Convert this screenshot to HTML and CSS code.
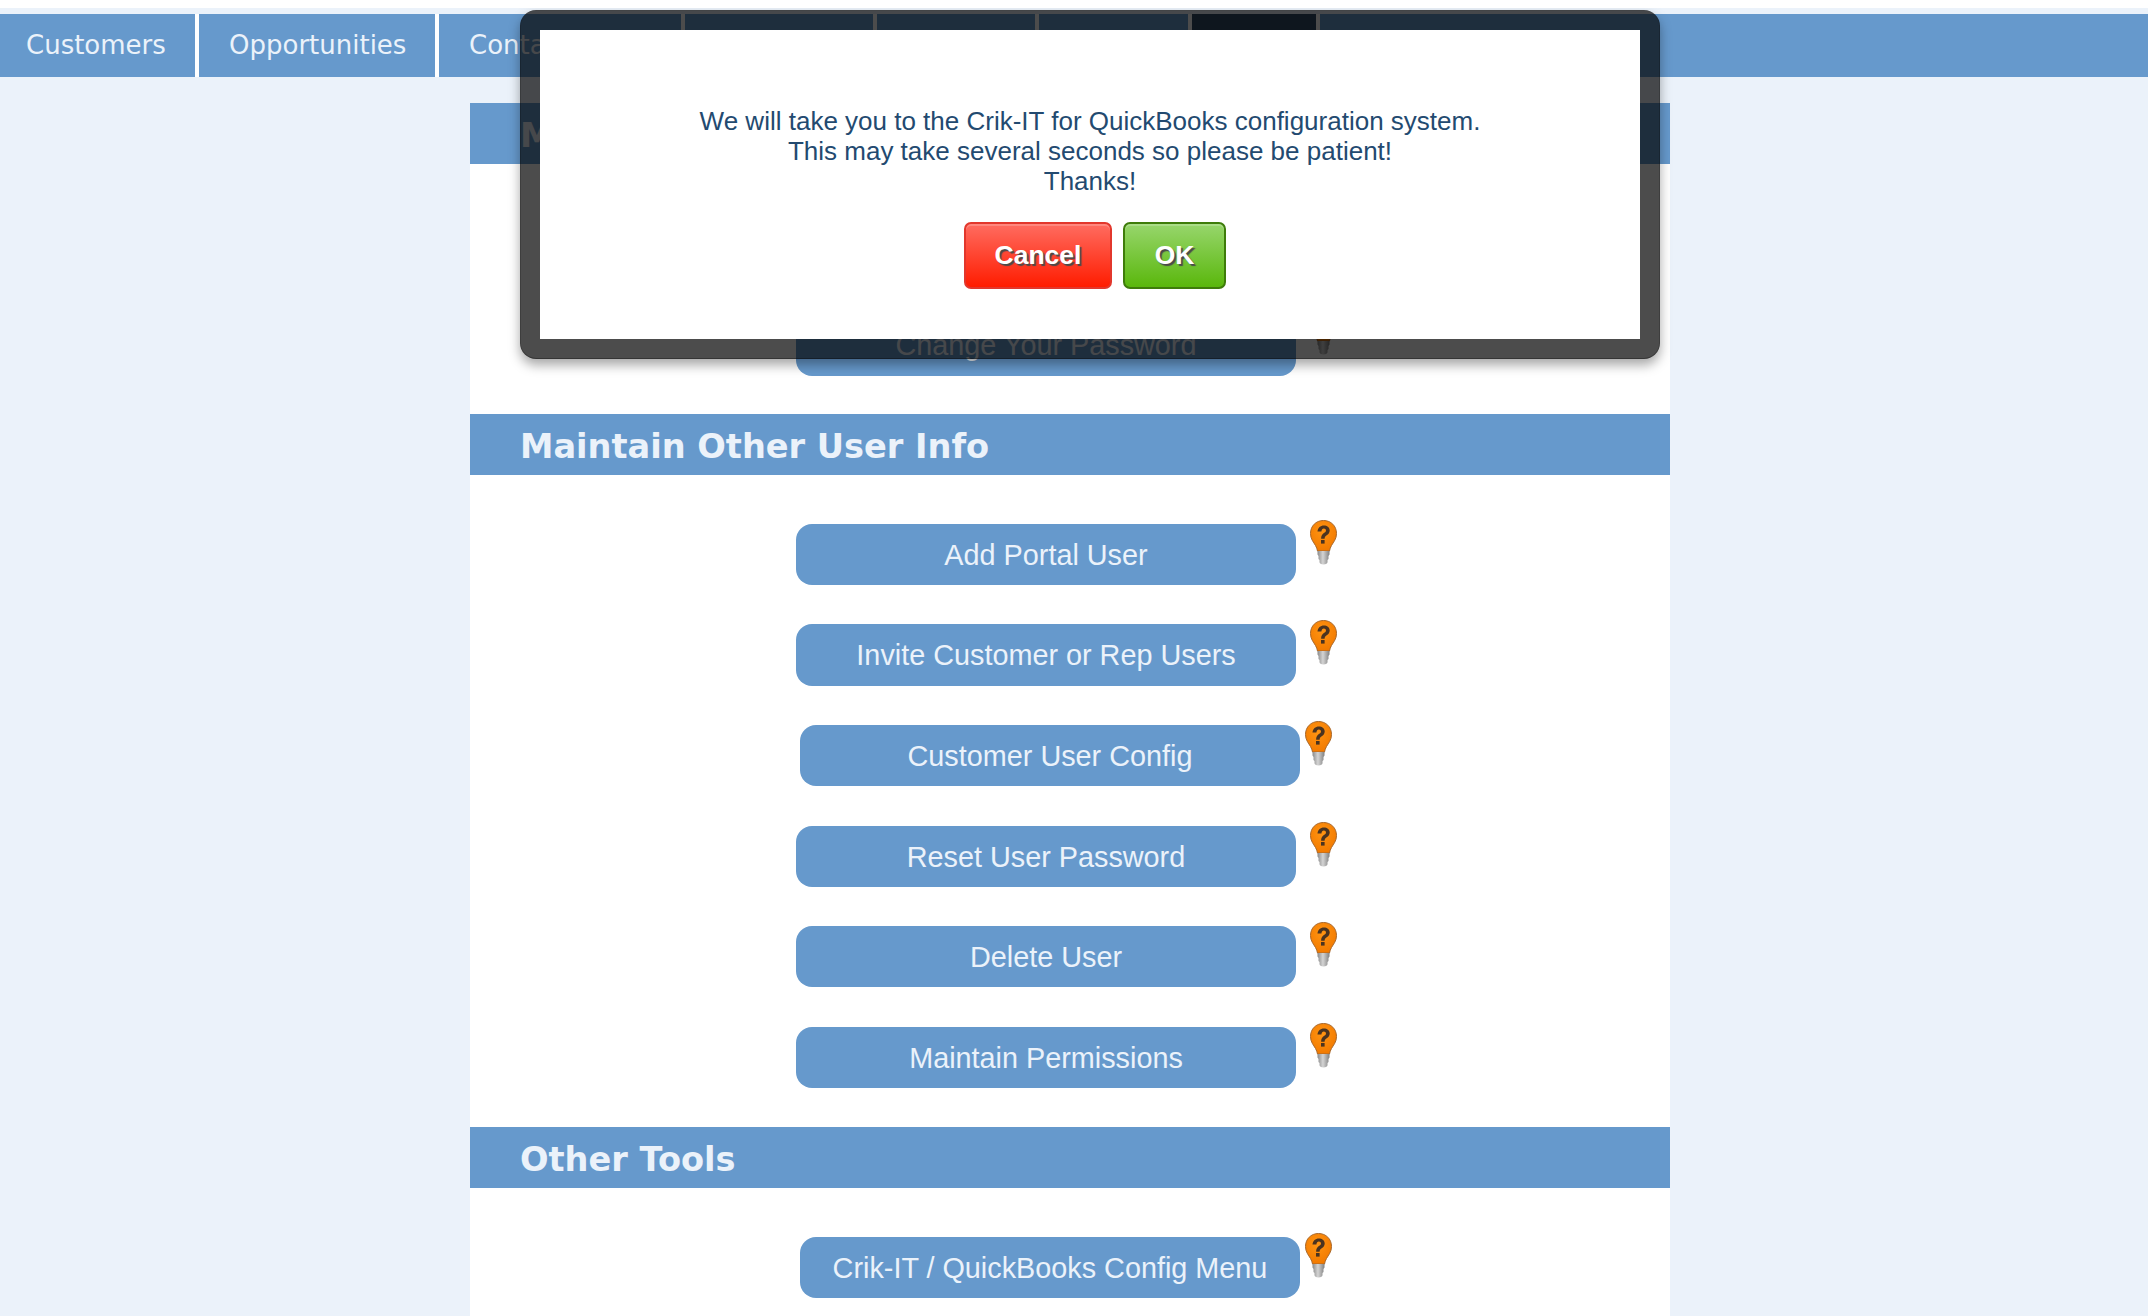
FILE: index.html
```html
<!DOCTYPE html>
<html lang="en">
<head>
<meta charset="utf-8">
<title>Crik-IT Portal</title>
<link rel="stylesheet" href="styles.css">
</head>
<body>
<svg class="defs" width="0" height="0" aria-hidden="true">
  <defs>
    <radialGradient id="bulbFill" cx="45%" cy="35%" r="65%">
      <stop offset="0" stop-color="#ff9412"/>
      <stop offset="1" stop-color="#f27a00"/>
    </radialGradient>
    <linearGradient id="baseFill" x1="0" x2="1" y1="0" y2="0">
      <stop offset="0" stop-color="#8a8a8a"/>
      <stop offset="0.45" stop-color="#d4d4d4"/>
      <stop offset="1" stop-color="#808080"/>
    </linearGradient>
    <symbol id="bulb" viewBox="0 0 27 45">
      <path d="M13.500 .5C6 .5 .5 6 .5 13.500c0 5.500 3 8.500 5 12 1 1.800 1.700 3.500 2 5.500h12c.3-2 1-3.700 2-5.500 2-3.500 5-6.500 5-12C26.500 6 21 .5 13.500 .5z" fill="url(#bulbFill)" stroke="#a8672a" stroke-width="1"/>
      <path d="M7.500 31h12v3.500l-1 1.500v3l-1 1v2c0 1.500-1.500 2.500-4 2.500s-4-1-4-2.500v-2l-1-1v-3l-1-1.500z" fill="url(#baseFill)"/>
      <path d="M7.500 11.500c.3-3.800 3-6 6.300-6 3.400 0 5.900 2.100 5.900 4.900 0 2.400-1.500 3.700-3 4.800-1.500 1-2.100 1.800-2.100 3.600h-3.500c0-3 1.100-4.400 2.800-5.700 1.300-1 2.100-1.600 2.100-2.700 0-1.100-.9-1.900-2.100-1.900-1.400 0-2.300 1-2.500 3z" fill="#4a3320"/>
      <rect x="11" y="20" width="3.600" height="3.600" fill="#4a3320"/>
    </symbol>
  </defs>
</svg>

<nav class="nav">
  <a class="tab tab-customers">Customers</a>
  <a class="tab tab-opportunities">Opportunities</a>
  <a class="tab tab-contacts">Contacts</a>
  <a class="tab tab-d"></a>
  <a class="tab tab-e"></a>
  <a class="tab tab-f"></a>
  <a class="tab tab-active"></a>
  <a class="tab tab-fill"></a>
</nav>

<main class="panel">
  <h2 class="section-title">Maintain Your User Info</h2>
  <section class="tools tools-first">
    <div class="tool-row">
      <a class="tool-btn">Change Your Password</a>
      <svg class="bulb"><use href="#bulb"/></svg>
    </div>
  </section>

  <h2 class="section-title">Maintain Other User Info</h2>
  <section class="tools">
    <div class="tool-row">
      <a class="tool-btn">Add Portal User</a>
      <svg class="bulb"><use href="#bulb"/></svg>
    </div>
    <div class="tool-row">
      <a class="tool-btn">Invite Customer or Rep Users</a>
      <svg class="bulb"><use href="#bulb"/></svg>
    </div>
    <div class="tool-row tool-row-shift">
      <a class="tool-btn">Customer User Config</a>
      <svg class="bulb"><use href="#bulb"/></svg>
    </div>
    <div class="tool-row">
      <a class="tool-btn">Reset User Password</a>
      <svg class="bulb"><use href="#bulb"/></svg>
    </div>
    <div class="tool-row">
      <a class="tool-btn">Delete User</a>
      <svg class="bulb"><use href="#bulb"/></svg>
    </div>
    <div class="tool-row">
      <a class="tool-btn">Maintain Permissions</a>
      <svg class="bulb"><use href="#bulb"/></svg>
    </div>
  </section>

  <h2 class="section-title">Other Tools</h2>
  <section class="tools">
    <div class="tool-row tool-row-shift">
      <a class="tool-btn">Crik-IT / QuickBooks Config Menu</a>
      <svg class="bulb"><use href="#bulb"/></svg>
    </div>
  </section>
</main>

<div class="modal" role="dialog">
  <div class="modal-body">
    <p class="modal-text">We will take you to the Crik-IT for QuickBooks configuration system.<br>This may take several seconds so please be patient!<br>Thanks!</p>
    <div class="modal-actions">
      <button class="modal-btn btn-cancel">Cancel</button>
      <button class="modal-btn btn-ok">OK</button>
    </div>
  </div>
</div>
</body>
</html>
```

FILE: styles.css
```css
html, body {
  margin: 0;
  padding: 0;
  height: 1316px;
  overflow: hidden;
}
body {
  background: #ebf2fa;
  border-top: 8px solid #ffffff;
  box-sizing: border-box;
  position: relative;
  font-family: "Liberation Sans", Arial, sans-serif;
}
.defs { position: absolute; }

.nav {
  display: flex;
  gap: 4px;
  margin-top: 6px;
  height: 63px;
  background: #ffffff;
}
.tab {
  box-sizing: border-box;
  background: #6699cc;
  color: #ebf2fa;
  font: 26px/63px "DejaVu Sans", Verdana, sans-serif;
  padding-left: 30px;
  white-space: nowrap;
  overflow: hidden;
}
.tab-customers { width: 195px; padding-left: 26px; }
.tab-opportunities { width: 236px; }
.tab-contacts { width: 242px; }
.tab-d { width: 188px; }
.tab-e { width: 158px; }
.tab-f { width: 149px; }
.tab-active { width: 124px; background: #2f4a66; }
.tab-fill { flex: 1; padding: 0; }

.panel {
  width: 1200px;
  margin: 26px 0 0 470px;
  background: #ffffff;
  height: 1300px;
}
.section-title {
  margin: 0;
  height: 61px;
  background: #6699cc;
  color: #ebf2fa;
  font: bold 33.600px/66px "DejaVu Sans", Verdana, sans-serif;
  padding-left: 50px;
}
.tools {
  display: flex;
  flex-direction: column;
  gap: 39.200px;
  padding: 48.700px 0 39px;
}
.tools-first { padding: 150.400px 0 38.300px; }
.tool-row {
  display: flex;
  align-items: flex-start;
  margin-left: 326px;
}
.tool-row-shift { margin-left: 330px; }
.tool-btn {
  width: 500px;
  height: 61.400px;
  border-radius: 16px;
  background: #6699cc;
  color: #ebf2fa;
  font-size: 28.800px;
  line-height: 62px;
  text-align: center;
  white-space: nowrap;
}
.bulb {
  width: 27px;
  height: 45px;
  margin: -4px 0 0 14px;
  filter: blur(0.6px);
}
.tool-row-shift .bulb { margin-left: 5px; }

.modal {
  position: absolute;
  left: 520px;
  top: 2px;
  width: 1140px;
  height: 349px;
  box-sizing: border-box;
  border: 20px solid rgba(0, 0, 0, 0.7);
  border-radius: 16px;
  background: #ffffff;
  background-clip: padding-box;
  box-shadow: 0 6px 12px rgba(0, 0, 0, 0.35);
}
.modal-body {
  padding-top: 76px;
  text-align: center;
  color: #234a70;
}
.modal-text {
  margin: 0;
  font-size: 26px;
  line-height: 30.200px;
}
.modal-actions {
  display: flex;
  justify-content: center;
  gap: 11px;
  margin: 25.500px 0 0 10px;
}
.modal-btn {
  height: 67px;
  box-sizing: border-box;
  border-radius: 7px;
  border: 2px solid;
  color: #ffffff;
  font: bold 26.500px "Liberation Sans", Arial, sans-serif;
  text-shadow: 2px 2px 1px #4a4a4a;
  padding: 0;
  box-shadow: inset 0 2px 0 rgba(255, 255, 255, 0.2);
}
.btn-cancel {
  width: 148px;
  border-color: #e2372c;
  background: linear-gradient(#ff6c60, #ff1c00);
}
.btn-ok {
  width: 103px;
  border-color: #3e7c0a;
  background: linear-gradient(#97d66c, #5ab70c);
}
```
